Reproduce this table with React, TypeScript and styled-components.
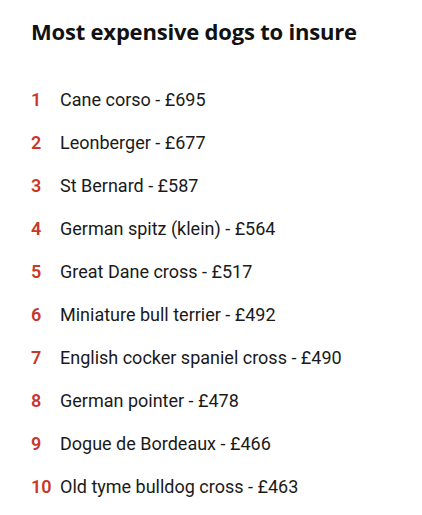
import React from "react";
import styled, { createGlobalStyle } from "styled-components";

const Global = createGlobalStyle`
  html, body { margin: 0; padding: 0; background: #fff; }
  body { font-family: Roboto, "Liberation Sans", sans-serif; color: #111; }
`;

const Wrapper = styled.div`
  padding: 16px 20px 0 31px;
`;

const Title = styled.h2`
  margin: 0;
  font-family: "Open Sans", sans-serif;
  font-weight: 700;
  font-size: 22px;
  line-height: 30px;
  letter-spacing: -0.2px;
  color: #111;
`;

const List = styled.ol`
  list-style: none;
  margin: 42px 0 0 0;
  padding: 0;
  display: flex;
  flex-direction: column;
  gap: 19px;
`;

const Item = styled.li`
  display: flex;
  align-items: baseline;
  font-size: 18px;
  line-height: 24px;
  color: #1a1a1a;
`;

const Num = styled.span`
  width: 29px;
  flex: none;
  color: #c8372b;
  font-weight: 600;
`;

const items = [
  "Cane corso - £695",
  "Leonberger - £677",
  "St Bernard - £587",
  "German spitz (klein) - £564",
  "Great Dane cross - £517",
  "Miniature bull terrier - £492",
  "English cocker spaniel cross - £490",
  "German pointer - £478",
  "Dogue de Bordeaux - £466",
  "Old tyme bulldog cross - £463",
];

export default function App() {
  return (
    <Wrapper>
      <Global />
      <Title>Most expensive dogs to insure</Title>
      <List>
        {items.map((t, i) => (
          <Item key={i}>
            <Num>{i + 1}</Num>
            <span>{t}</span>
          </Item>
        ))}
      </List>
    </Wrapper>
  );
}
